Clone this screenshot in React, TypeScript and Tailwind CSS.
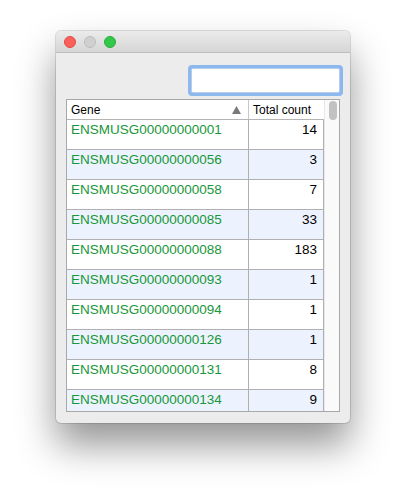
import React from "react";

const rows: [string, string][] = [
  ["ENSMUSG00000000001", "14"],
  ["ENSMUSG00000000056", "3"],
  ["ENSMUSG00000000058", "7"],
  ["ENSMUSG00000000085", "33"],
  ["ENSMUSG00000000088", "183"],
  ["ENSMUSG00000000093", "1"],
  ["ENSMUSG00000000094", "1"],
  ["ENSMUSG00000000126", "1"],
  ["ENSMUSG00000000131", "8"],
  ["ENSMUSG00000000134", "9"],
];

export default function App() {
  return (
    <div
      className="w-[406px] h-[503px] bg-white overflow-hidden pt-[31px] pl-[56px]"
      style={{ fontFamily: '"Liberation Sans", Arial, sans-serif' }}
    >
      <div className="w-[294px] h-[392px] rounded-[5px] bg-[#ececec] shadow-[0_22px_38px_rgba(0,0,0,0.42),0_0_0_1px_rgba(0,0,0,0.12)] flex flex-col overflow-hidden">
        {/* title bar */}
        <div className="h-[22px] shrink-0 bg-gradient-to-b from-[#ebebeb] to-[#d6d6d6] border-b border-[#bdbdbd] flex items-center gap-[8px] pl-[8px]">
          <div className="w-[12px] h-[12px] rounded-full bg-[#fc605c] border border-[#de4b46]" />
          <div className="w-[12px] h-[12px] rounded-full bg-[#d0d0d0] border border-[#bcbcbc]" />
          <div className="w-[12px] h-[12px] rounded-full bg-[#34c84a] border border-[#29ad3b]" />
        </div>
        {/* search */}
        <div className="flex justify-end pt-[12px] pr-[7px]">
          <div className="w-[155px] h-[31px] rounded-[4px] bg-[#8cb8ef] p-[3px]">
            <div className="w-full h-full bg-white rounded-[2px] border border-[#b9cde8]" />
          </div>
        </div>
        {/* table */}
        <div className="ml-[10px] mt-[3px] w-[274px] h-[313px] border border-[#a8a8a8] bg-white flex overflow-hidden">
          <div className="w-[257px] flex flex-col">
            <div className="h-[20px] shrink-0 flex border-b border-[#b5b5b5] text-[12px] text-black">
              <div className="w-[182px] border-r border-[#c8c8c8] flex items-center justify-between pl-[4px] pr-[7px]">
                <span>Gene</span>
                <svg width="9" height="8" viewBox="0 0 9 8">
                  <path d="M4.5 0 L9 8 L0 8 Z" fill="#7a7a7a" />
                </svg>
              </div>
              <div className="w-[75px] flex items-center pl-[4px]">Total count</div>
            </div>
            {rows.map(([g, c], i) => (
              <div
                key={g}
                className={`h-[30px] shrink-0 flex border-b border-[#b0b0b0] ${i % 2 === 1 ? "bg-[#edf3fe]" : "bg-white"}`}
              >
                <div className="w-[182px] border-r border-[#b0b0b0] pl-[4px] pt-[1px] text-[13.5px] leading-[17px] text-[#18973a]">
                  {g}
                </div>
                <div className="w-[75px] border-r border-[#b0b0b0] pr-[6px] pt-[1px] text-right text-[13.5px] leading-[17px] text-black">
                  {c}
                </div>
              </div>
            ))}
          </div>
          <div className="w-[15px] bg-[#fafafa] border-l border-[#e8e8e8] relative">
            <div className="absolute left-[4px] top-[1px] w-[8px] h-[19px] rounded-full bg-[#c2c2c2]" />
          </div>
        </div>
      </div>
    </div>
  );
}
